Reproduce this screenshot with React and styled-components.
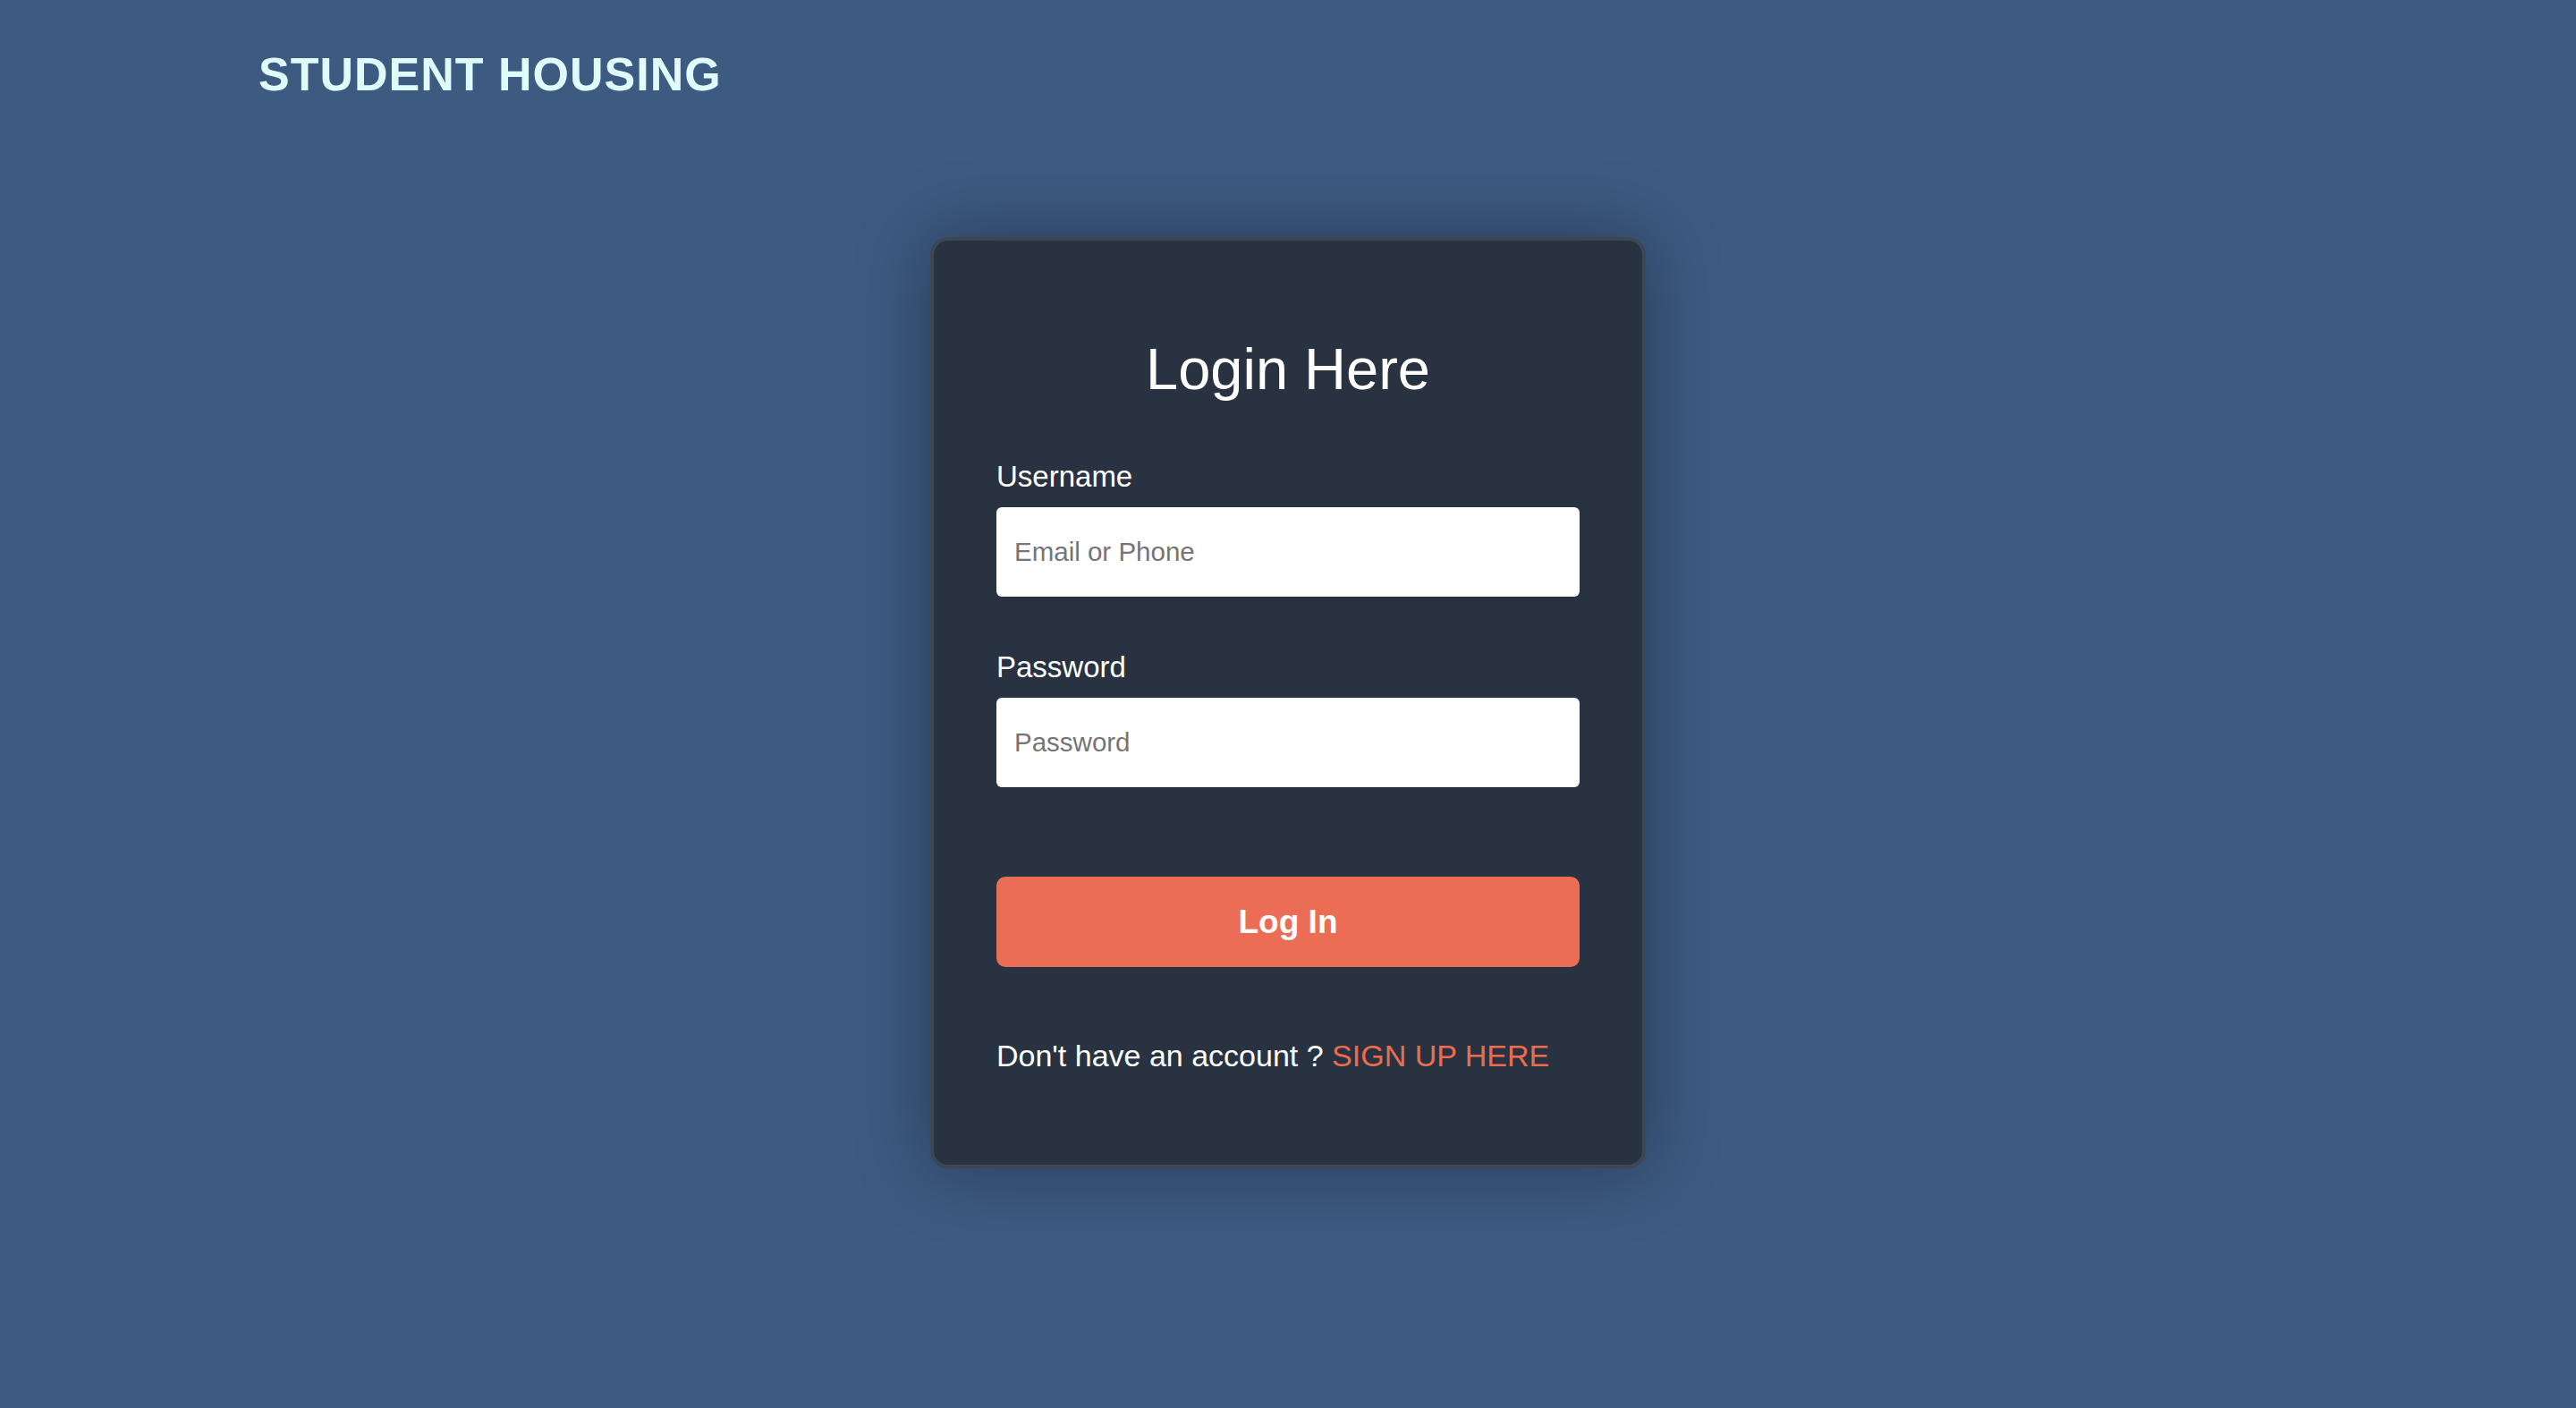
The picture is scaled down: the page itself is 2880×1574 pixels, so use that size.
import React from 'react'
import styled, { createGlobalStyle } from 'styled-components'

const GlobalStyle = createGlobalStyle`
  html, body {
    margin: 0;
    padding: 0;
    background: #3d5a80;
    font-family: "Liberation Sans", Arial, Helvetica, sans-serif;
  }
  * {
    box-sizing: border-box;
  }
`

const Page = styled.div`
  min-height: 100vh;
  display: flex;
  flex-direction: column;
  background: #3d5a80;
`

const Header = styled.header`
  padding: 53px 0 0 289px;
`

const Brand = styled.h1`
  margin: 0;
  font-size: 52px;
  line-height: 60px;
  font-weight: 700;
  letter-spacing: 1px;
  color: #e0fbfc;
`

const Main = styled.main`
  display: flex;
  justify-content: center;
  padding-top: 152px;
`

const Card = styled.form`
  width: 800px;
  padding: 104px 70px 103px;
  display: flex;
  flex-direction: column;
  background: #293241;
  border: 4px solid rgba(255, 255, 255, 0.1);
  border-radius: 20px;
  box-shadow: 0 0 80px rgba(8, 7, 16, 0.35);
`

const Title = styled.h2`
  margin: 0;
  font-size: 65px;
  line-height: 80px;
  font-weight: 400;
  text-align: center;
  color: #ffffff;
`

const Field = styled.div`
  display: flex;
  flex-direction: column;
  margin-top: ${p => p.$top}px;
`

const Label = styled.label`
  font-size: 33px;
  line-height: 36px;
  font-weight: 500;
  color: #ffffff;
  margin-bottom: 16px;
`

const Input = styled.input`
  height: 100px;
  width: 100%;
  padding: 0 20px;
  border: none;
  border-radius: 6px;
  background: #ffffff;
  font-family: inherit;
  font-size: 29.5px;
  color: #222;
  outline: none;

  &::placeholder {
    color: #757575;
  }
`

const Button = styled.button`
  margin-top: 100px;
  height: 101px;
  width: 100%;
  border: none;
  border-radius: 10px;
  background: #ec6d55;
  color: #ffffff;
  font-family: inherit;
  font-size: 37px;
  font-weight: 700;
  cursor: pointer;
`

const Footer = styled.p`
  margin: 80px 0 0;
  font-size: 34px;
  line-height: 38px;
  color: #ffffff;
`

const SignUp = styled.a`
  color: #ee6c4d;
  text-decoration: none;
`

export default function App() {
  return (
    <Page>
      <GlobalStyle />
      <Header>
        <Brand>STUDENT HOUSING</Brand>
      </Header>
      <Main>
        <Card onSubmit={e => e.preventDefault()}>
          <Title>Login Here</Title>
          <Field $top={62}>
            <Label htmlFor="username">Username</Label>
            <Input id="username" type="text" placeholder="Email or Phone" />
          </Field>
          <Field $top={61}>
            <Label htmlFor="password">Password</Label>
            <Input id="password" type="password" placeholder="Password" />
          </Field>
          <Button type="submit">Log In</Button>
          <Footer>
            Don't have an account ? <SignUp href="#">SIGN UP HERE</SignUp>
          </Footer>
        </Card>
      </Main>
    </Page>
  )
}
